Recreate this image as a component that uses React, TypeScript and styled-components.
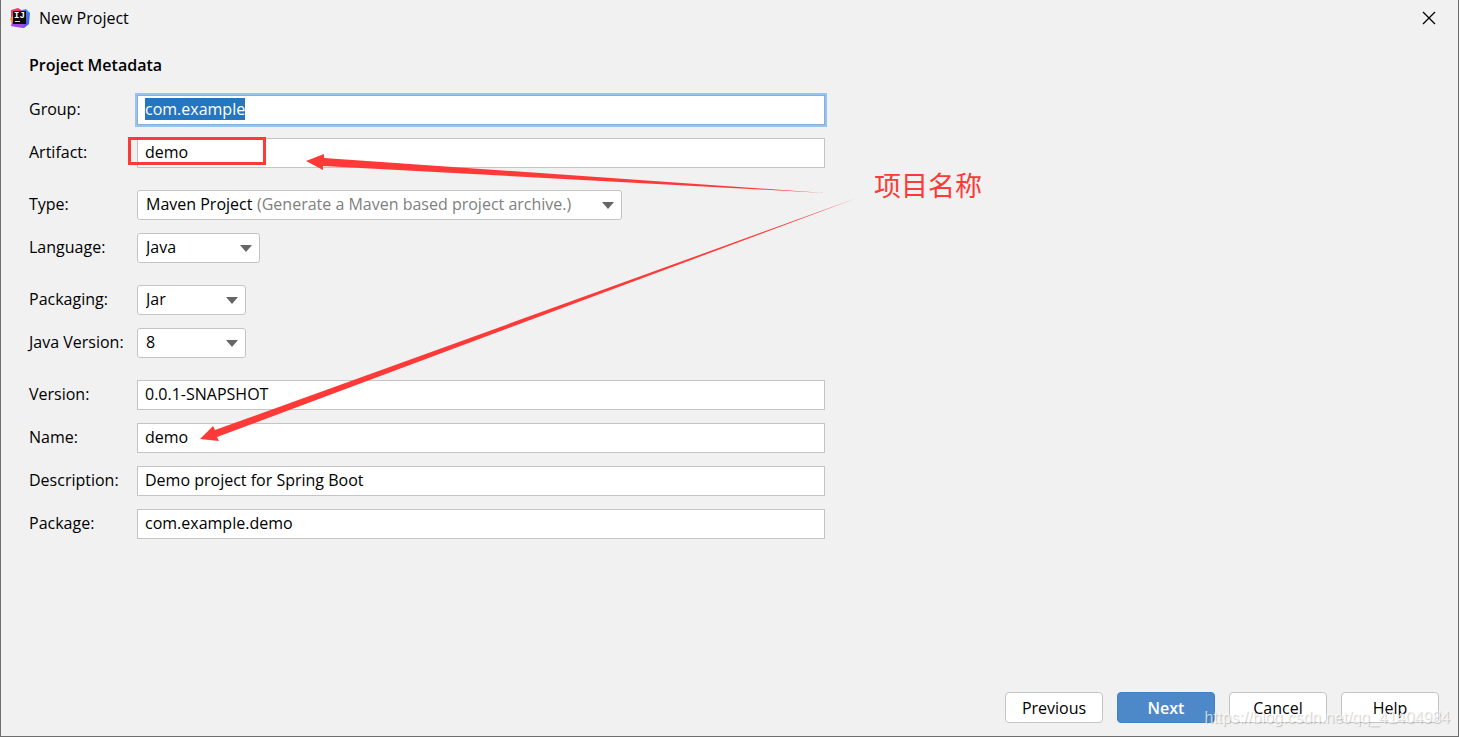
import React, { useEffect, useRef } from "react";
import styled, { createGlobalStyle } from "styled-components";

const GlobalStyle = createGlobalStyle`
  * { box-sizing: border-box; }
  body {
    margin: 0;
    background: #f1f1f1;
    color: #000;
    font-family: "Open Sans", "Noto Sans CJK SC", sans-serif;
    font-size: 16px;
    line-height: 22px;
  }
  input, select, button { font: inherit; color: inherit; }
`;

const Dialog = styled.div`
  position: relative;
  display: flex;
  flex-direction: column;
  min-height: 100vh;
  border: 1px solid #6e6e6e;
  border-top: 0;
  background: #f1f1f1;
  overflow: hidden;
`;

const TitleBar = styled.header`
  display: flex;
  align-items: center;
  gap: 8px;
  height: 36px;
  padding: 0 20px 0 8px;
`;

const Title = styled.h1`
  flex: 1;
  margin: 0;
  font-size: 16px;
  font-weight: 400;
`;

const CloseButton = styled.button`
  display: flex;
  padding: 2px;
  border: 0;
  background: transparent;
`;

const Form = styled.form`
  flex: 1;
  display: flex;
  flex-direction: column;
  padding: 18px 28px 24px;
`;

const Heading = styled.h2`
  margin: 0 0 19px;
  font-size: 16px;
  font-weight: 600;
`;

const Groups = styled.div`
  display: flex;
  flex-direction: column;
  gap: 22px;
`;

const Group = styled.div`
  display: flex;
  flex-direction: column;
  gap: 13px;
`;

const Row = styled.div`
  display: flex;
  align-items: center;
  height: 30px;
`;

const Label = styled.label`
  flex: 0 0 108px;
  padding-bottom: 2px;
  white-space: nowrap;
`;

const TextField = styled.input`
  flex: 0 1 688px;
  min-width: 0;
  height: 30px;
  padding: 0 7px 2px;
  border: 1px solid #c4c4c4;
  background: #fff;
  outline: none;

  &:focus {
    border-color: #87afda;
    box-shadow: 0 0 0 2px #97c3f3;
  }
  &::selection {
    background: #2675bf;
    color: #fff;
  }
`;

const SelectBox = styled.div<{ $width: number }>`
  flex: 0 1 ${(p) => p.$width}px;
  display: grid;
  align-items: center;
  > * { grid-area: 1 / 1; }
`;

const Select = styled.select`
  appearance: none;
  width: 100%;
  height: 30px;
  padding: 0 28px 2px 8px;
  border: 1px solid #c4c4c4;
  border-radius: 3px;
  background: #fff;
`;

const Hint = styled.span`
  padding: 0 0 2px 120px;
  color: #808080;
  white-space: nowrap;
  pointer-events: none;
`;

const Arrow = styled.svg`
  justify-self: end;
  margin-right: 8px;
  pointer-events: none;
`;

const Footer = styled.footer`
  display: flex;
  justify-content: flex-end;
  gap: 14px;
  padding: 0 19px 13px;
`;

const Button = styled.button<{ $primary?: boolean }>`
  width: 98px;
  height: 31px;
  padding: 0;
  border: 1px solid ${(p) => (p.$primary ? "#4480bf" : "#c4c4c4")};
  border-radius: 4px;
  background: ${(p) => (p.$primary ? "#4d89c9" : "#fff")};
  color: ${(p) => (p.$primary ? "#fff" : "#000")};
  font-weight: ${(p) => (p.$primary ? 600 : 400)};
`;

const Markup = styled.svg`
  position: absolute;
  top: 0;
  left: 0;
  pointer-events: none;
`;

const Note = styled.span`
  position: absolute;
  top: 165px;
  left: 873px;
  color: #fd3a38;
  font-family: "Noto Sans CJK SC", sans-serif;
  font-size: 27px;
  line-height: 40px;
`;

const Watermark = styled.span`
  position: absolute;
  right: 8px;
  bottom: 7px;
  color: rgba(255, 255, 255, 0.7);
  font-family: "Liberation Sans", Arial, sans-serif;
  font-size: 16px;
  text-shadow: 1px 1px 1px rgba(0, 0, 0, 0.2);
  pointer-events: none;
`;

const Logo = () => (
  <svg width="22" height="22" viewBox="0 0 22 22" aria-hidden="true">
    <defs>
      <linearGradient id="logo-blue" x1="0" y1="0" x2="0" y2="1">
        <stop offset="0" stopColor="#2f8af5" />
        <stop offset="1" stopColor="#5a4fe8" />
      </linearGradient>
      <linearGradient id="logo-pink" x1="0" y1="0" x2="1" y2="0">
        <stop offset="0" stopColor="#fd3a5c" />
        <stop offset="1" stopColor="#f0308c" />
      </linearGradient>
    </defs>
    <path d="M13 3l4-1 4 4-1 11-5 4-6-2z" fill="url(#logo-blue)" />
    <path d="M2 3l7-2 5 3-3 8-9-1z" fill="url(#logo-pink)" />
    <path d="M1 12l3-4 4 6-5 3z" fill="#fb8b35" />
    <path d="M3 15l7-1 6 5-2 2-7-1-5-1z" fill="#a04be8" />
    <rect x="4" y="4" width="13" height="13" fill="#0b0b0d" />
    <text x="5" y="11" fill="#fff" fontFamily="Liberation Mono, monospace" fontWeight="700" fontSize="9">IJ</text>
    <path d="M6 14.500h5" stroke="#ddd" />
  </svg>
);

type FieldProps = { id: string; label: string; value: string };

const Field = ({ id, label, value, selected }: FieldProps & { selected?: boolean }) => {
  const ref = useRef<HTMLInputElement>(null);
  useEffect(() => {
    if (selected) {
      ref.current?.focus();
      ref.current?.select();
    }
  }, [selected]);
  return (
    <Row>
      <Label htmlFor={id}>{label}:</Label>
      <TextField ref={ref} id={id} type="text" defaultValue={value} spellCheck={false} />
    </Row>
  );
};

const Choice = ({ id, label, value, width, hint }: FieldProps & { width: number; hint?: string }) => (
  <Row>
    <Label htmlFor={id}>{label}:</Label>
    <SelectBox $width={width}>
      <Select id={id} defaultValue={value}>
        <option>{value}</option>
      </Select>
      {hint && <Hint>{hint}</Hint>}
      <Arrow width="12" height="7" viewBox="0 0 12 7" aria-hidden="true">
        <path d="M0 0h12L6 7z" fill="#666" />
      </Arrow>
    </SelectBox>
  </Row>
);

export default function App() {
  return (
    <>
      <GlobalStyle />
      <Dialog>
        <TitleBar>
          <Logo />
          <Title>New Project</Title>
          <CloseButton type="button" aria-label="Close">
            <svg width="14" height="14" viewBox="0 0 14 14" aria-hidden="true">
              <path d="M1 1l12 12M13 1L1 13" stroke="#000" strokeWidth="1.3" />
            </svg>
          </CloseButton>
        </TitleBar>
        <Form id="metadata">
          <Heading>Project Metadata</Heading>
          <Groups>
            <Group>
              <Field id="group" label="Group" value="com.example" selected />
              <Field id="artifact" label="Artifact" value="demo" />
            </Group>
            <Group>
              <Choice id="type" label="Type" value="Maven Project" width={485} hint="(Generate a Maven based project archive.)" />
              <Choice id="language" label="Language" value="Java" width={123} />
            </Group>
            <Group>
              <Choice id="packaging" label="Packaging" value="Jar" width={109} />
              <Choice id="java-version" label="Java Version" value="8" width={109} />
            </Group>
            <Group>
              <Field id="version" label="Version" value="0.0.1-SNAPSHOT" />
              <Field id="name" label="Name" value="demo" />
              <Field id="description" label="Description" value="Demo project for Spring Boot" />
              <Field id="package" label="Package" value="com.example.demo" />
            </Group>
          </Groups>
        </Form>
        <Footer>
          <Button type="button">Previous</Button>
          <Button type="submit" form="metadata" $primary>Next</Button>
          <Button type="button">Cancel</Button>
          <Button type="button">Help</Button>
        </Footer>
        <Markup width="1000" height="460" viewBox="1 0 1000 460" aria-hidden="true">
          <rect x="129.5" y="138.5" width="135" height="25" fill="none" stroke="#fd3a38" strokeWidth="3" />
          <path d="M306 161l18-7v4L825 193 323 166v4z" fill="#fd3a38" />
          <path d="M200 439l13-13 2 4L857 198 217 437l2 4z" fill="#fd3a38" />
        </Markup>
        <Note>项目名称</Note>
        <Watermark>https://blog.csdn.net/qq_41404984</Watermark>
      </Dialog>
    </>
  );
}
